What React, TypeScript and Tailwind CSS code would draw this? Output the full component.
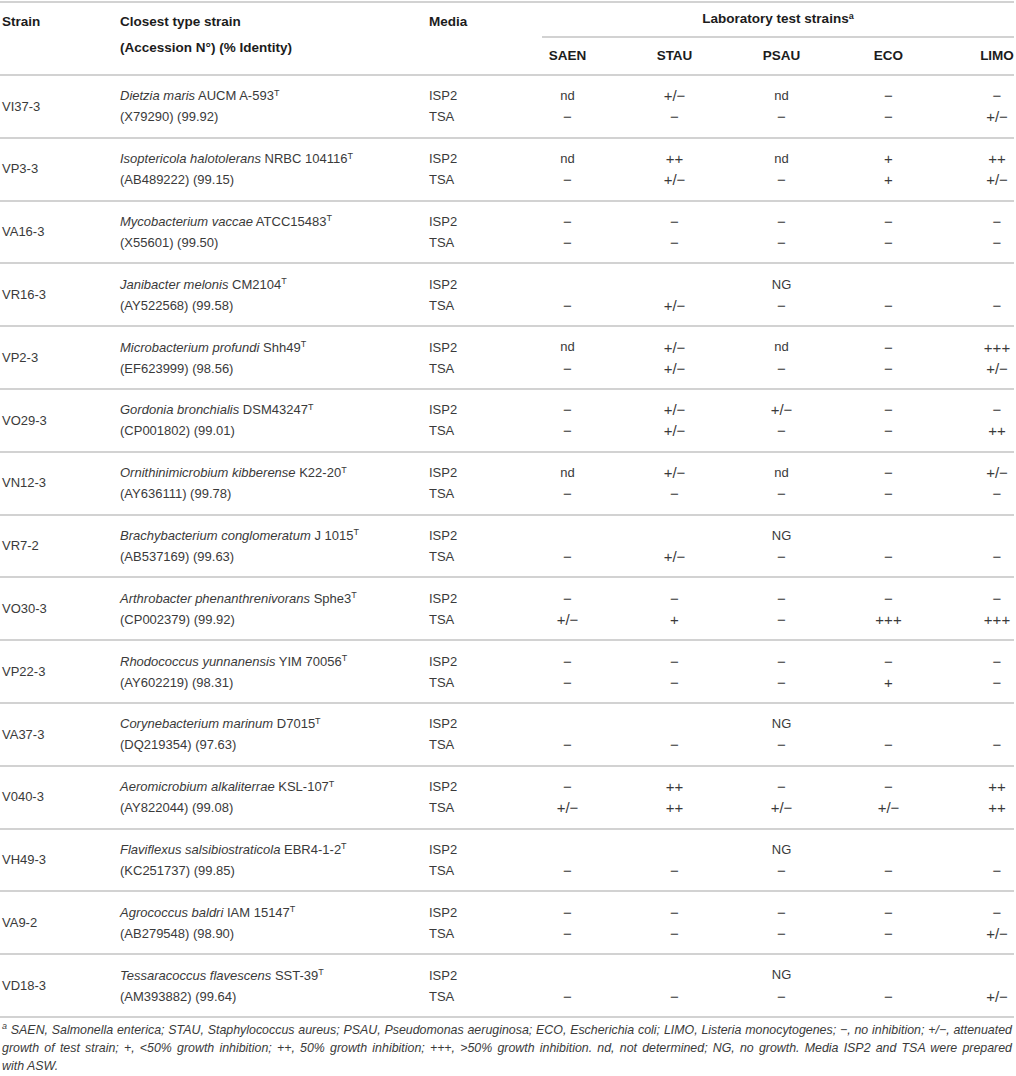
import { ReactNode } from 'react';

type Strain = {
  id: string;
  species: string;
  code: string;
  accession: string;
  isp2: string[] | 'NG';
  tsa: string[];
};

const M = '\u2212';
const PM = `+/${M}`;

const strains: Strain[] = [
  { id: 'VI37-3', species: 'Dietzia maris', code: 'AUCM A-593', accession: '(X79290) (99.92)', isp2: ['nd', PM, 'nd', M, M], tsa: [M, M, M, M, PM] },
  { id: 'VP3-3', species: 'Isoptericola halotolerans', code: 'NRBC 104116', accession: '(AB489222) (99.15)', isp2: ['nd', '++', 'nd', '+', '++'], tsa: [M, PM, M, '+', PM] },
  { id: 'VA16-3', species: 'Mycobacterium vaccae', code: 'ATCC15483', accession: '(X55601) (99.50)', isp2: [M, M, M, M, M], tsa: [M, M, M, M, M] },
  { id: 'VR16-3', species: 'Janibacter melonis', code: 'CM2104', accession: '(AY522568) (99.58)', isp2: 'NG', tsa: [M, PM, M, M, M] },
  { id: 'VP2-3', species: 'Microbacterium profundi', code: 'Shh49', accession: '(EF623999) (98.56)', isp2: ['nd', PM, 'nd', M, '+++'], tsa: [M, PM, M, M, PM] },
  { id: 'VO29-3', species: 'Gordonia bronchialis', code: 'DSM43247', accession: '(CP001802) (99.01)', isp2: [M, PM, PM, M, M], tsa: [M, PM, M, M, '++'] },
  { id: 'VN12-3', species: 'Ornithinimicrobium kibberense', code: 'K22-20', accession: '(AY636111) (99.78)', isp2: ['nd', PM, 'nd', M, PM], tsa: [M, M, M, M, M] },
  { id: 'VR7-2', species: 'Brachybacterium conglomeratum', code: 'J 1015', accession: '(AB537169) (99.63)', isp2: 'NG', tsa: [M, PM, M, M, M] },
  { id: 'VO30-3', species: 'Arthrobacter phenanthrenivorans', code: 'Sphe3', accession: '(CP002379) (99.92)', isp2: [M, M, M, M, M], tsa: [PM, '+', M, '+++', '+++'] },
  { id: 'VP22-3', species: 'Rhodococcus yunnanensis', code: 'YIM 70056', accession: '(AY602219) (98.31)', isp2: [M, M, M, M, M], tsa: [M, M, M, '+', M] },
  { id: 'VA37-3', species: 'Corynebacterium marinum', code: 'D7015', accession: '(DQ219354) (97.63)', isp2: 'NG', tsa: [M, M, M, M, M] },
  { id: 'V040-3', species: 'Aeromicrobium alkaliterrae', code: 'KSL-107', accession: '(AY822044) (99.08)', isp2: [M, '++', M, M, '++'], tsa: [PM, '++', PM, PM, '++'] },
  { id: 'VH49-3', species: 'Flaviflexus salsibiostraticola', code: 'EBR4-1-2', accession: '(KC251737) (99.85)', isp2: 'NG', tsa: [M, M, M, M, M] },
  { id: 'VA9-2', species: 'Agrococcus baldri', code: 'IAM 15147', accession: '(AB279548) (98.90)', isp2: [M, M, M, M, M], tsa: [M, M, M, M, PM] },
  { id: 'VD18-3', species: 'Tessaracoccus flavescens', code: 'SST-39', accession: '(AM393882) (99.64)', isp2: 'NG', tsa: [M, M, M, M, PM] },
];

const testCols = ['SAEN', 'STAU', 'PSAU', 'ECO', 'LIMO'];

// one cell per test strain column; the last one is pushed right so its centre sits near the edge
function Cell({ idx, children }: { idx: number; children: ReactNode }) {
  return idx === 4 ? (
    <div className="w-[72px] shrink-0 pl-[38px] flex justify-center whitespace-nowrap">{children}</div>
  ) : (
    <div className="w-[107px] shrink-0 flex justify-center whitespace-nowrap">{children}</div>
  );
}

function ValueLine({ values }: { values: string[] | 'NG' }) {
  const cells = values === 'NG' ? ['', '', 'NG', '', ''] : values;
  return (
    <div className="flex h-[21px] items-center">
      {cells.map((v, i) => (
        <Cell key={i} idx={i}>
          {/[+\u2212]/.test(v) ? <span className="text-[15px] leading-[21px]">{v}</span> : v}
        </Cell>
      ))}
    </div>
  );
}

export default function App() {
  return (
    <div className="w-[1016px] bg-white pt-[1px] font-['Liberation_Sans',Arial,sans-serif] text-[13px] text-[#3a3a3a]">
      <div className="w-[1014px]">
        {/* Header */}
        <div className="flex h-[75px] border-t-2 border-b-2 border-[#d2d2d2] font-bold text-[13.5px] text-[#1c1c1c]">
          <div className="w-[120px] shrink-0 pl-[2px] pt-[6px] leading-[26px]">Strain</div>
          <div className="w-[309px] shrink-0 pt-[6px] leading-[26px]">
            Closest type strain
            <br />
            (Accession N°) (% Identity)
          </div>
          <div className="w-[85px] shrink-0 pt-[6px] leading-[26px]">Media</div>
          <div className="flex flex-1 flex-col">
            <div className="ml-[28px] flex h-[35px] items-center justify-center border-b-2 border-[#d2d2d2]">
              <span>
                Laboratory test strains<sup className="text-[9px] leading-none">a</sup>
              </span>
            </div>
            <div className="flex flex-1 items-center">
              {testCols.map((c, i) => (
                <Cell key={c} idx={i}>
                  {c}
                </Cell>
              ))}
            </div>
          </div>
        </div>

        {/* Rows */}
        {strains.map((s) => (
          <div key={s.id} className="flex h-[62.8px] items-center border-b-2 border-[#d2d2d2]">
            <div className="w-[120px] shrink-0 pl-[2px]">{s.id}</div>
            <div className="w-[309px] shrink-0 leading-[21px]">
              <div>
                <i>{s.species}</i> {s.code}
                <sup className="text-[9px]">T</sup>
              </div>
              <div>{s.accession}</div>
            </div>
            <div className="w-[85px] shrink-0 leading-[21px]">
              <div>ISP2</div>
              <div>TSA</div>
            </div>
            <div className="flex flex-1 flex-col">
              <ValueLine values={s.isp2} />
              <ValueLine values={s.tsa} />
            </div>
          </div>
        ))}
      </div>

      {/* Footnote */}
      <div className="w-[1012px] pl-[2px] pt-[3px] text-[12.4px] italic leading-[18px] text-[#3a3a3a]">
        <div className="whitespace-nowrap text-justify [text-align-last:justify]">
          <sup className="text-[9px] leading-none">a</sup> SAEN, Salmonella enterica; STAU, Staphylococcus aureus; PSAU, Pseudomonas aeruginosa; ECO, Escherichia coli; LIMO, Listeria monocytogenes; {M}, no inhibition; +/{M}, attenuated
        </div>
        <div className="whitespace-nowrap text-justify [text-align-last:justify]">
          growth of test strain; +, &lt;50% growth inhibition; ++, 50% growth inhibition; +++, &gt;50% growth inhibition. nd, not determined; NG, no growth. Media ISP2 and TSA were prepared
        </div>
        <div>with ASW.</div>
      </div>
    </div>
  );
}
